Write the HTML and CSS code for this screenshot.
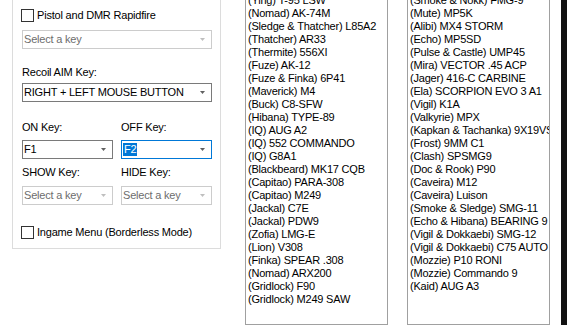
FILE: index.html
```html
<!DOCTYPE html>
<html lang="en">
<head>
    <meta charset="UTF-8">
    <title>Recoil Settings</title>
    <link rel="stylesheet" href="styles.css">
</head>
<body>
    <div class="window">
        <div class="group">
            <div class="check"><span class="box"></span>Pistol and DMR Rapidfire</div>
            <div class="combo disabled first">
                <span>Select a key</span>
                <svg class="arrow" width="5" height="3" viewBox="0 0 5 3"><polygon points="0,0 5,0 2.5,3"/></svg>
            </div>
            <div class="label aim">Recoil AIM Key:</div>
            <div class="combo">
                <span>RIGHT + LEFT MOUSE BUTTON</span>
                <svg class="arrow" width="5" height="3" viewBox="0 0 5 3"><polygon points="0,0 5,0 2.5,3"/></svg>
            </div>
            <div class="pair keys">
                <div class="field">
                    <div class="label">ON Key:</div>
                    <div class="combo">
                        <span>F1</span>
                        <svg class="arrow" width="5" height="3" viewBox="0 0 5 3"><polygon points="0,0 5,0 2.5,3"/></svg>
                    </div>
                </div>
                <div class="field">
                    <div class="label">OFF Key:</div>
                    <div class="combo focused">
                        <span class="selected">F2</span>
                        <svg class="arrow" width="5" height="3" viewBox="0 0 5 3"><polygon points="0,0 5,0 2.5,3"/></svg>
                    </div>
                </div>
            </div>
            <div class="pair view">
                <div class="field">
                    <div class="label">SHOW Key:</div>
                    <div class="combo disabled">
                        <span>Select a key</span>
                        <svg class="arrow" width="5" height="3" viewBox="0 0 5 3"><polygon points="0,0 5,0 2.5,3"/></svg>
                    </div>
                </div>
                <div class="field">
                    <div class="label">HIDE Key:</div>
                    <div class="combo disabled">
                        <span>Select a key</span>
                        <svg class="arrow" width="5" height="3" viewBox="0 0 5 3"><polygon points="0,0 5,0 2.5,3"/></svg>
                    </div>
                </div>
            </div>
            <div class="check last"><span class="box"></span>Ingame Menu (Borderless Mode)</div>
        </div>

        <div class="list first-list">
            <ul>
                <li>(Ying) T-95 LSW</li>
                <li>(Nomad) AK-74M</li>
                <li>(Sledge &amp; Thatcher) L85A2</li>
                <li>(Thatcher) AR33</li>
                <li>(Thermite) 556XI</li>
                <li>(Fuze) AK-12</li>
                <li>(Fuze &amp; Finka) 6P41</li>
                <li>(Maverick) M4</li>
                <li>(Buck) C8-SFW</li>
                <li>(Hibana) TYPE-89</li>
                <li>(IQ) AUG A2</li>
                <li>(IQ) 552 COMMANDO</li>
                <li>(IQ) G8A1</li>
                <li>(Blackbeard) MK17 CQB</li>
                <li>(Capitao) PARA-308</li>
                <li>(Capitao) M249</li>
                <li>(Jackal) C7E</li>
                <li>(Jackal) PDW9</li>
                <li>(Zofia) LMG-E</li>
                <li>(Lion) V308</li>
                <li>(Finka) SPEAR .308</li>
                <li>(Nomad) ARX200</li>
                <li>(Gridlock) F90</li>
                <li>(Gridlock) M249 SAW</li>
            </ul>
        </div>

        <div class="list second-list">
            <ul>
                <li>(Smoke &amp; Nokk) FMG-9</li>
                <li>(Mute) MP5K</li>
                <li>(Alibi) MX4 STORM</li>
                <li>(Echo) MP5SD</li>
                <li>(Pulse &amp; Castle) UMP45</li>
                <li>(Mira) VECTOR .45 ACP</li>
                <li>(Jager) 416-C CARBINE</li>
                <li>(Ela) SCORPION EVO 3 A1</li>
                <li>(Vigil) K1A</li>
                <li>(Valkyrie) MPX</li>
                <li>(Kapkan &amp; Tachanka) 9X19VSN</li>
                <li>(Frost) 9MM C1</li>
                <li>(Clash) SPSMG9</li>
                <li>(Doc &amp; Rook) P90</li>
                <li>(Caveira) M12</li>
                <li>(Caveira) Luison</li>
                <li>(Smoke &amp; Sledge) SMG-11</li>
                <li>(Echo &amp; Hibana) BEARING 9</li>
                <li>(Vigil &amp; Dokkaebi) SMG-12</li>
                <li>(Vigil &amp; Dokkaebi) C75 AUTO</li>
                <li>(Mozzie) P10 RONI</li>
                <li>(Mozzie) Commando 9</li>
                <li>(Kaid) AUG A3</li>
            </ul>
        </div>

        <div class="edge"></div>
    </div>
</body>
</html>
```

FILE: styles.css
```css
/* WinForms look, 8.25pt Microsoft Sans Serif approximated */
html, body { margin: 0; padding: 0; background: #fff; }
body { font-family: "Liberation Sans", Arial, sans-serif; font-size: 11px; line-height: 13px; letter-spacing: -0.2px; color: #000; overflow: hidden; }
.window { display: flex; width: 567px; height: 325px; overflow: hidden; align-items: flex-start; }

.group { margin-left: 12px; width: 209px; box-sizing: border-box; border: 1px solid #dcdcdc; border-top: none; padding: 9px 8px 9px 9px; }
.check { display: flex; align-items: center; height: 13px; margin-left: -1px; }
.check .box { width: 13px; height: 13px; box-sizing: border-box; border: 1px solid #333; background: #fff; margin-right: 3px; flex: none; }
.check.last { margin-top: 21px; }

.label { height: 13px; white-space: nowrap; }
.label.aim { margin-top: 17px; }

.combo { display: flex; align-items: center; justify-content: space-between; height: 19px; box-sizing: border-box; border: 1px solid #7a7a7a; background: #fff; padding: 0 6px 0 1px; white-space: nowrap; }
.combo.first { margin-top: 8px; }
.label + .combo { margin-top: 4px; }
.combo .arrow { fill: #606060; flex: none; }
.combo.disabled { border-color: #cccccc; color: #6d6d6d; }
.combo.disabled .arrow { fill: #bfbfbf; }
.combo.focused { border-color: #0078d7; }
.combo .selected { background: #0078d7; color: #fff; padding: 0 1px; line-height: 13px; }

.pair { display: grid; grid-template-columns: 91px 91px; column-gap: 8px; }
.pair.keys { margin-top: 19px; }
.pair.keys .combo { margin-top: 6px; }
.pair.view { margin-top: 7px; }
.pair.view .combo { margin-top: 7px; }

.list { width: 143px; height: 325px; box-sizing: border-box; border: 1px solid #a0a0a0; border-top: none; background: #fff; overflow: hidden; }
.first-list { margin-left: 24px; }
.second-list { margin-left: 19px; }
.list ul { list-style: none; margin: -6px 0 0 0; padding: 0 0 0 2px; }
.list li { height: 13px; white-space: nowrap; }

.edge { width: 6px; height: 325px; margin-left: 11px; background: #111; }
```
